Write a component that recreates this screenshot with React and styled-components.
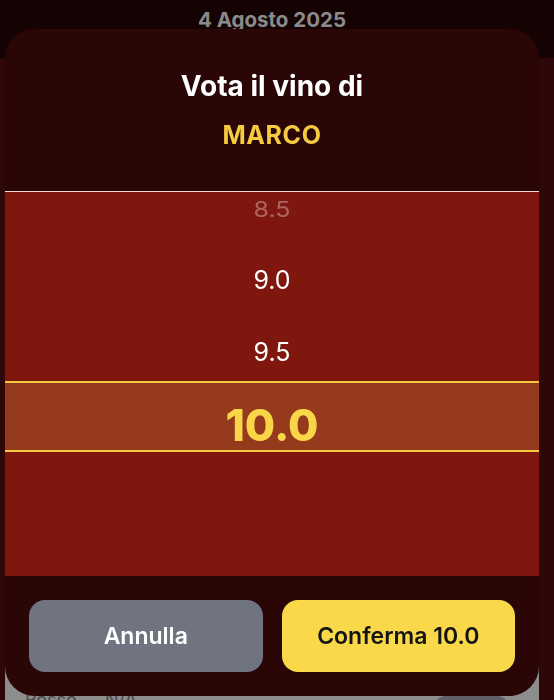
import React from 'react';
import styled, { createGlobalStyle } from 'styled-components';

const Global = createGlobalStyle`
  html, body { margin: 0; padding: 0; overflow: hidden; background: #150304; }
  body { font-family: Inter, "Noto Sans", "Liberation Sans", sans-serif; }
  * { box-sizing: border-box; }
`;

const Screen = styled.div`
  height: 700px;
  overflow: hidden;
  display: flex;
  flex-direction: column;
  background: #2e0808;
`;

const TopBar = styled.header`
  height: 58px;
  flex: none;
  background: #150304;
  padding: 7px 15px 0 5px;
`;

const DateLabel = styled.div`
  text-align: center;
  font-size: 20.5px;
  line-height: 25px;
  font-weight: 700;
  color: #8a8a8a;
`;

const Content = styled.main`
  flex: 1;
  padding: 0 15px 0 5px;
`;

const WineCard = styled.section`
  margin-top: 560px;
  height: 200px;
  background: #8d8d8d;
  padding: 71px 26px 0 20px;
`;

const WineRow = styled.div`
  display: flex;
  align-items: flex-start;
  gap: 28px;
  font-size: 18px;
  line-height: 22px;
  color: #4a4a4a;
`;

const Pill = styled.div`
  margin-left: auto;
  margin-top: 6px;
  width: 83px;
  height: 40px;
  border-radius: 20px;
  background: #606068;
`;

const Sheet = styled.div`
  position: fixed;
  top: 29px;
  left: 5px;
  width: 534px;
  height: 667px;
  border-radius: 30px;
  background: #2b0607;
  overflow: hidden;
  display: flex;
  flex-direction: column;
`;

const SheetHeader = styled.div`
  height: 162px;
  flex: none;
  padding-top: 40px;
  display: flex;
  flex-direction: column;
  align-items: center;
  gap: 17px;
`;

const Title = styled.h2`
  margin: 0;
  font-size: 28px;
  line-height: 34px;
  font-weight: 700;
  color: #ffffff;
`;

const Name = styled.div`
  font-size: 25px;
  line-height: 30px;
  font-weight: 700;
  letter-spacing: 0.6px;
  color: #f5cb41;
`;

const Picker = styled.div`
  position: relative;
  flex: none;
  height: 385px;
  border-top: 1px solid rgba(255, 240, 240, 0.9);
  background: #80170f;
  overflow: hidden;
`;

const SelectionBand = styled.div`
  position: absolute;
  left: 0;
  right: 0;
  top: 189px;
  height: 71px;
  background: #963a1e;
  border-top: 2px solid #f5c842;
  border-bottom: 2px solid #f5c842;
  z-index: 0;
`;

const Wheel = styled.div`
  position: relative;
  z-index: 1;
  margin-top: -20px;
  display: flex;
  flex-direction: column;
`;

const WheelItem = styled.div`
  height: 72px;
  display: flex;
  align-items: center;
  justify-content: center;
  font-size: ${(p) => (p.$selected ? '44px' : '25px')};
  font-weight: ${(p) => (p.$selected ? 800 : 400)};
  color: ${(p) => (p.$selected ? '#f8d648' : '#ffffff')};
  opacity: ${(p) => (p.$faded ? 0.33 : 1)};
  transform: ${(p) => (p.$faded ? 'scaleY(0.84)' : 'none')};
  transform-origin: 50% 60%;
  padding-top: ${(p) => (p.$selected ? '1px' : '0')};
`;

const Footer = styled.div`
  flex: 1;
  padding: 24px 24px 24px;
  display: grid;
  grid-template-columns: 1fr 1fr;
  gap: 19px;
`;

const ActionButton = styled.button`
  height: 72px;
  border: none;
  border-radius: 16px;
  font-family: inherit;
  font-size: 23px;
  font-weight: 600;
  cursor: pointer;
  background: ${(p) => (p.$primary ? '#f9d84a' : '#6f7480')};
  color: ${(p) => (p.$primary ? '#141414' : '#ffffff')};
`;

const values = [
  { v: '8.5', faded: true },
  { v: '9.0' },
  { v: '9.5' },
  { v: '10.0', selected: true },
  { v: '' },
];

export default function App() {
  return (
    <>
      <Global />
      <Screen>
        <TopBar>
          <DateLabel>4 Agosto 2025</DateLabel>
        </TopBar>
        <Content>
          <WineCard>
            <WineRow>
              <span>Rosso</span>
              <span>N/A</span>
              <Pill />
            </WineRow>
          </WineCard>
        </Content>
      </Screen>
      <Sheet>
        <SheetHeader>
          <Title>Vota il vino di</Title>
          <Name>MARCO</Name>
        </SheetHeader>
        <Picker>
          <SelectionBand />
          <Wheel>
            {values.map((it, i) => (
              <WheelItem key={i} $faded={it.faded} $selected={it.selected}>
                {it.v}
              </WheelItem>
            ))}
          </Wheel>
        </Picker>
        <Footer>
          <ActionButton>Annulla</ActionButton>
          <ActionButton $primary>Conferma 10.0</ActionButton>
        </Footer>
      </Sheet>
    </>
  );
}
